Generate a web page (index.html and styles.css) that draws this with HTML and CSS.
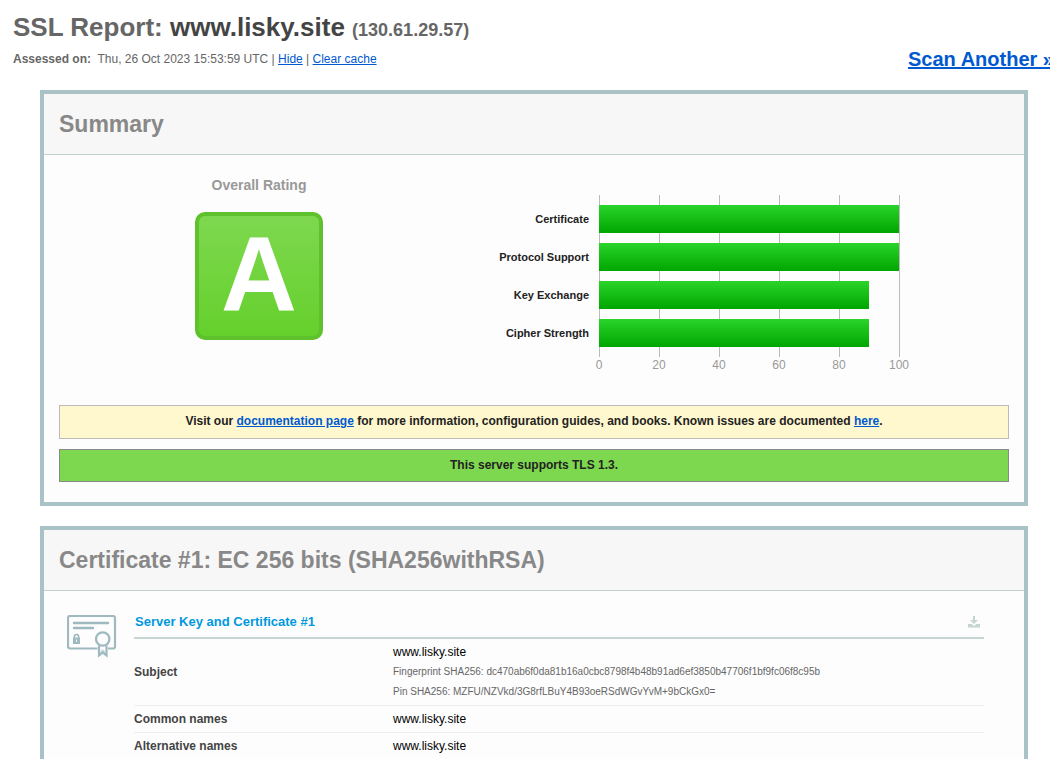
FILE: index.html
```
<!DOCTYPE html>
<html lang="en">
<head>
<meta charset="utf-8">
<title>SSL Report: www.lisky.site</title>
<link rel="stylesheet" href="styles.css">
</head>
<body>
<header class="top">
  <div class="report">
    <h1 class="title">SSL Report: <span class="host">www.lisky.site</span> <span class="ip">(130.61.29.57)</span></h1>
    <p class="info"><b>Assessed on:</b>&nbsp; Thu, 26 Oct 2023 15:53:59 UTC | <a href="#hide">Hide</a> | <a href="#clear">Clear cache</a></p>
  </div>
  <a class="scan" href="#scan">Scan Another »</a>
</header>
<main class="panels">
  <section class="panel">
    <h2 class="panel-title">Summary</h2>
    <div class="panel-body">
      <div class="summary">
        <div class="rating">
          <div class="rating-title">Overall Rating</div>
          <div class="grade">A</div>
        </div>
        <div class="chart">
          <div class="labels">
            <span>Certificate</span>
            <span>Protocol Support</span>
            <span>Key Exchange</span>
            <span>Cipher Strength</span>
          </div>
          <div class="plot">
            <div class="bars">
              <div class="bar" style="width:100%"></div>
              <div class="bar" style="width:100%"></div>
              <div class="bar" style="width:90%"></div>
              <div class="bar" style="width:90%"></div>
            </div>
            <div class="ticks"><span>0</span><span>20</span><span>40</span><span>60</span><span>80</span><span>100</span></div>
          </div>
        </div>
      </div>
      <p class="notice notice-info">Visit our <a href="#docs">documentation page</a> for more information, configuration guides, and books. Known issues are documented <a href="#issues">here</a>.</p>
      <p class="notice notice-good">This server supports TLS 1.3.</p>
    </div>
  </section>
  <section class="panel">
    <h2 class="panel-title">Certificate #1: EC 256 bits (SHA256withRSA)</h2>
    <div class="certificate">
      <svg class="cert-icon" width="50" height="44" viewBox="0 0 50 44" fill="none" stroke="#9fb9c0" aria-hidden="true">
        <path d="M30.500 33.500H3.500Q1 33.500 1 31.500V3Q1 1 3 1H46Q48 1 48 3V31.500Q48 33.500 46 33.500H41" stroke-width="2.200"/>
        <path d="M7 8H41M7 13H26" stroke-width="2.400" stroke-linecap="round"/>
        <path d="M7.300 23V22A2.200 2.500 0 0 1 11.700 22V23" stroke-width="1.500"/>
        <path d="M6 22.500H13V29H6Z" fill="#9fb9c0" stroke="none"/>
        <path d="M9.500 24.500V26.800" stroke="#fdfdfd"/>
        <circle cx="35.700" cy="24" r="6.700" stroke-width="2.300"/>
        <path d="M32 30.500V40.500L35.700 37.500L39.500 40.500V30.500" stroke-width="2.200"/>
        <path d="M33.500 36L35.700 34L38 36V38H33.500Z" fill="#9fb9c0" stroke="none" opacity=".5"/>
      </svg>
      <table class="details">
        <colgroup><col class="name-column"><col></colgroup>
        <thead>
          <tr><th colspan="2" scope="colgroup"><div class="table-head"><span>Server Key and Certificate #1</span>
            <a href="#download" aria-label="Download certificate"><svg width="12" height="12" viewBox="0 0 12 12" fill="#c6d4d4" aria-hidden="true"><path d="M5 0H7V4H10L6 8L2 4H5ZM0 8H3.500L6 10L8.500 8H12V11.500H0Z"/></svg></a></div></th></tr>
        </thead>
        <tbody>
          <tr><th scope="row">Subject</th><td>www.lisky.site<div class="hash">Fingerprint SHA256: dc470ab6f0da81b16a0cbc8798f4b48b91ad6ef3850b47706f1bf9fc06f8c95b</div><div class="hash">Pin SHA256: MZFU/NZVkd/3G8rfLBuY4B93oeRSdWGvYvM+9bCkGx0=</div></td></tr>
          <tr><th scope="row">Common names</th><td>www.lisky.site</td></tr>
          <tr><th scope="row">Alternative names</th><td>www.lisky.site</td></tr>
        </tbody>
      </table>
    </div>
  </section>
</main>
</body>
</html>
```
FILE: styles.css
```
* { box-sizing: border-box; }
body {
  margin: 0;
  height: 100vh;
  overflow: hidden;
  background: #fff;
  color: #222;
  font: 12px/20px "Liberation Sans", Arial, sans-serif;
}
h1, h2, p { margin: 0; }
a { color: #0059d0; }

.top {
  display: flex;
  justify-content: space-between;
  align-items: flex-end;
  height: 90px;
  padding: 0 0 16px 13px;
}
.report { align-self: flex-start; padding-top: 10px; color: #666; }
.title { font-size: 26px; line-height: 34px; }
.host { color: #444; }
.ip { font-size: 18px; }
.info { margin-top: 2px; }
.scan {
  margin-right: -4px;
  font-size: 20px;
  line-height: 30px;
  font-weight: bold;
  white-space: nowrap;
}

.panels { margin: 0 22px 0 40px; }
.panel {
  margin-bottom: 20px;
  border: 4px solid #a8c2c6;
  background: #fdfdfd;
}
.panel-title {
  padding: 15px;
  border-bottom: 1px solid #c0d0d0;
  background: #f7f7f7;
  color: #888;
  font-size: 23px;
  line-height: 30px;
}
.panel-body { padding: 20px 15px; }

.summary {
  display: grid;
  grid-template-columns: 400px 1fr;
  height: 230px;
}
.rating { display: flex; flex-direction: column; align-items: center; gap: 17px; }
.rating-title { color: #999; font-size: 14px; font-weight: bold; }
.grade {
  width: 128px;
  height: 128px;
  border: 4px solid #5fc22d;
  border-radius: 10px;
  background: linear-gradient(#7ed84f, #65d02c);
  color: #fff;
  font-size: 105px;
  line-height: 118px;
  font-weight: bold;
  text-align: center;
}
.chart {
  display: grid;
  grid-template-columns: 130px 301px;
  gap: 10px;
  padding-top: 20px;
}
.labels, .bars {
  display: grid;
  grid-auto-rows: 28px;
  gap: 10px;
  padding: 10px 0;
  align-content: start;
}
.labels {
  color: #222;
  font-size: 11px;
  line-height: 28px;
  font-weight: bold;
  text-align: right;
}
.bars {
  padding-right: 1px;
  background: repeating-linear-gradient(to right, #bbb 0 1px, transparent 1px 60px);
}
.bar { background: linear-gradient(#2ad42a, #00a600); }
.ticks {
  display: grid;
  grid-template-columns: repeat(6, 60px);
  margin-left: -30px;
  color: #999;
  line-height: 16px;
  text-align: center;
}

.notice {
  padding: 5px 6px 6px;
  border: 1px solid #bbb;
  font-weight: bold;
  text-align: center;
}
.notice-info { margin-bottom: 10px; padding-bottom: 7px; background: #fff8ce; }
.notice-good { border-color: #888; background: #7ed84f; }

.certificate {
  display: grid;
  grid-template-columns: 50px 1fr;
  gap: 17px;
  padding: 18px 40px 0 23px;
}
.cert-icon { margin-top: 6px; }
.details { width: 100%; border-collapse: collapse; table-layout: fixed; }
.name-column { width: 259px; }
.details th, .details td { padding: 3px 0; text-align: left; }
.details th { color: #444; }
.details td { color: #000; }
.details tbody tr { border-bottom: 1px solid #eee; }
.details thead th { padding: 3px 0 5px; border-bottom: 2px solid #c6d4d4; }
.table-head {
  display: flex;
  justify-content: space-between;
  align-items: center;
  padding: 0 4px 0 1px;
  color: #0099dd;
  font-size: 13px;
}
.table-head a { display: flex; }
.details .hash { color: #666; font-size: 10px; }
```
